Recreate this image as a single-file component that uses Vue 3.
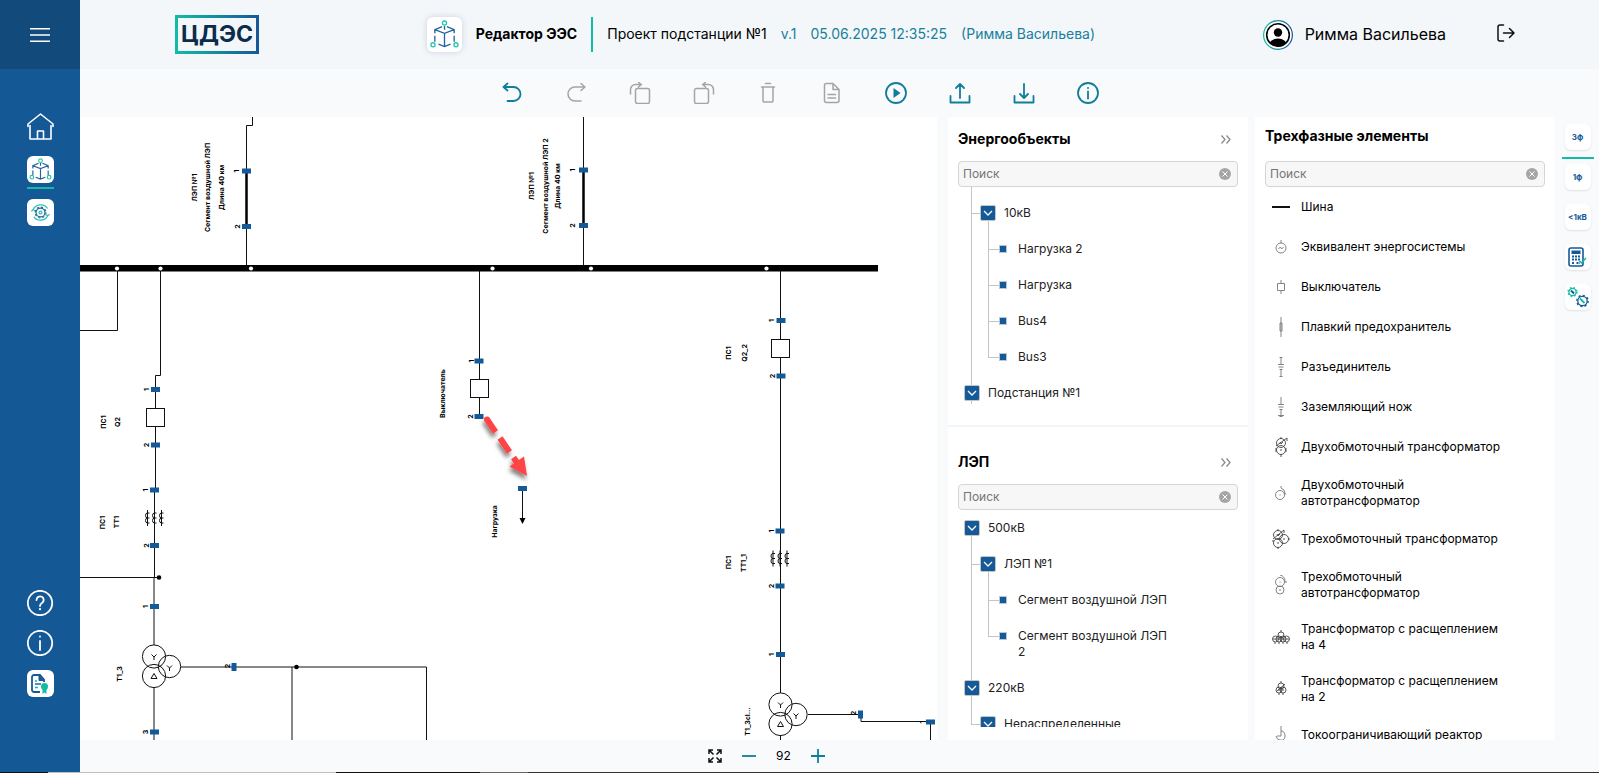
<script setup>
import { ref } from 'vue'

const zoom = ref(92)
const pan = { x: -80, y: -117 }

const circle = (x, y, r) => `M${x - r} ${y}a${r} ${r} 0 1 0 ${2 * r} 0a${r} ${r} 0 1 0 ${-2 * r} 0`

/* Toolbar */
const tools = [
  { name: 'Отменить', on: true, d: 'M7.500 1.500L3.500 5l4 3.500M3.500 5h10a6.500 6.500 0 0 1 0 14H7.500' },
  { name: 'Повторить', on: false, d: 'M17 1.500L21 5l-4 3.500M21 5H11a6.500 6.500 0 0 0 0 14h6' },
  { name: 'Копировать', on: false, d: 'M9.500 6.500h10a2 2 0 0 1 2 2v11a2 2 0 0 1-2 2h-10a2 2 0 0 1-2-2v-11a2 2 0 0 1 2-2zM2.500 12V7.500a5 5 0 0 1 5-5h6M10.500 .5L13.500 2.500l-3 2.500' },
  { name: 'Вставить', on: false, d: 'M4.500 6.500h10a2 2 0 0 1 2 2v11a2 2 0 0 1-2 2h-10a2 2 0 0 1-2-2v-11a2 2 0 0 1 2-2zM21.500 12V7.500a5 5 0 0 0-5-5h-6M13.500 .5L10.500 2.500l3 2.500' },
  { name: 'Удалить', on: false, d: 'M5.500 5h13M9.500 1.500h5M7 5v14a1 1 0 0 0 1 1h8a1 1 0 0 0 1-1V5' },
  { name: 'Отчёт', on: false, d: 'M4.500 3.500a2 2 0 0 1 2-2H13l6 6v11a2 2 0 0 1-2 2H6.500a2 2 0 0 1-2-2zM13 1.500v6h6M8 12.500h7.500M8 16h7.500' },
  { name: 'Запустить расчёт', on: true, d: circle(12, 11, 10), f: 'M9.500 6l7 5-7 5z' },
  { name: 'Выгрузить', on: true, d: 'M2.500 14v6.500h19V14M12 16V2M8 6l4-4 4 4' },
  { name: 'Загрузить', on: true, d: 'M2.500 14v6.500h19V14M12 2v14M8 12l4 4 4-4' },
  { name: 'Информация', on: true, d: circle(12, 11, 10) + 'M12 9.500v7', f: circle(12, 6, 1) },
]

/* Single-line diagram */
const wires = [
  'M252.500 117V125.500H246.500V266',
  'M583.500 117V266',
  'M117.500 271V330.500H80',
  'M160.500 271V375.500H155.500V490',
  'M154.500 490V577',
  'M80 577.500H159',
  'M154 577V645M154 688V740',
  'M181 667H426.500V740M292 667V740',
  'M479.500 271V416',
  'M522.500 489V520',
  'M780.500 271V693M780.500 735V740',
  'M808 714.500H861V721.500H930.500V740',
]
const joints = [117, 160.5, 251, 492.5, 591, 766.5]
const dots = [[159, 577.5], [296.5, 667]]
const ports = [
  [246.5, 171], [246.5, 226.5], [583.5, 170], [583.5, 225.5],
  [155.5, 389.5], [155.5, 445], [154.5, 490], [154.5, 545.5], [154.5, 606.5], [154.5, 732],
  [479, 361], [479, 416.5], [522.5, 488.5],
  [781, 320.5], [781, 376], [780, 531], [780, 586], [780.5, 654.5], [930.5, 722],
]
const sidePorts = [[234, 667], [860.5, 714.5]]
const breakers = [[146.5, 408.5], [470.5, 379.5], [771.5, 339.5]]
const coils = [[147.5, 518], [154.5, 518], [161.5, 518], [773, 558.5], [780, 558.5], [787, 558.5]]
const transformers = [[154, 656.5], [780.5, 704.5]]
const labels = [
  [194, 187.5, 'ЛЭП №1'], [207.5, 187.5, 'Сегмент воздушной ЛЭП'], [221, 187.5, 'Длина 40 км'],
  [531.5, 186, 'ЛЭП №1'], [545, 186, 'Сегмент воздушной ЛЭП 2'], [557.5, 186, 'Длина 40 км'],
  [103.5, 422, 'ПС1'], [117.5, 422, 'Q2'], [102.5, 522.5, 'ПС1'], [116.5, 522, 'ТТ1'],
  [119.5, 674, 'Т1_3'], [442, 393.5, 'Выключатель'], [494.5, 521.5, 'Нагрузка'],
  [728.5, 353, 'ПС1'], [744, 353, 'Q2_2'], [728, 562.5, 'ПС1'], [743, 563, 'ТТ1_1'], [747, 721.5, 'Т1_3cl...'],
  [236, 171, '1'], [237, 226.5, '2'], [572.5, 170, '1'], [572.5, 225.5, '2'],
  [146.5, 389.5, '1'], [146.5, 445, '2'], [145.5, 490, '1'], [146.5, 545.5, '2'], [145.5, 606.5, '1'], [145.5, 732, '3'],
  [471, 361, '1'], [470.5, 416.5, '2'], [771.5, 320.5, '1'], [772.5, 376, '2'],
  [771.5, 531, '1'], [771.5, 586, '2'], [771.5, 654.5, '1'],
  [227.5, 666, '2'], [853.5, 713, '2'], [922, 722, '1'],
]

/* Trees */
const objects = [
  { children: [{ name: '10кВ', children: ['Нагрузка 2', 'Нагрузка', 'Bus4', 'Bus3'] }] },
  { name: 'Подстанция №1', children: [] },
]
const lines = [
  { name: '500кВ', children: [{ name: 'ЛЭП №1', children: ['Сегмент воздушной ЛЭП', 'Сегмент воздушной ЛЭП 2'] }] },
  { name: '220кВ', children: [{ name: 'Нераспределенные', children: [] }] },
]
const trees = [
  { id: 'objects', title: 'Энергообъекты', nodes: objects },
  { id: 'lines', title: 'ЛЭП', nodes: lines },
]

/* Element palette */
const palette = [
  { name: 'Шина', bold: true, d: 'M1 10h18' },
  { name: 'Эквивалент энергосистемы', d: circle(10, 11, 5) + 'M10 3v3M7.500 12q1.500-3 2.500-1t2.500-1' },
  { name: 'Выключатель', d: 'M6.500 6.500h7v7h-7zM10 3v3M10 14v3' },
  { name: 'Плавкий предохранитель', d: 'M10 0v20M9 6h2v8h-2z' },
  { name: 'Разъединитель', d: 'M10 0v7M10 12v8M7 7.500h6M7.500 10h5M8.500 12.500h3M8.500 .5h3M8.500 19.500h3' },
  { name: 'Заземляющий нож', d: 'M10 0v7M10 12v7M7 7.500h6M7.500 10h5M8.500 12.500h3M7 18.500h6M8.500 19.500h3' },
  { name: 'Двухобмоточный трансформатор', dark: true, d: circle(10, 6, 4.5) + circle(10, 13, 4.5) + 'M10 0v2M10 17v3M5 9L16 1M16 1v3M9 5l1 2 2-2M9 13h2M5 11v4M15 11v4' },
  { name: 'Двухобмоточный автотрансформатор', d: circle(9, 12, 4.5) + 'M9 11.500v1M10 3v2q4 1 4 6h1' },
  { name: 'Трехобмоточный трансформатор', dark: true, d: circle(7, 6, 4.5) + circle(7, 14, 4.5) + circle(13, 10, 4.5) + 'M7 0v2M7 18v2M17 10h2M2 10l11-9M13 1v3M6 5l1 2 2-2M6 14h2M12 10h2M1 12h2' },
  { name: 'Трехобмоточный автотрансформатор', d: circle(9, 7, 4.5) + circle(9, 15, 4) + 'M9 6.500v1M8 15h2M9 0q5 1 5 7h2' },
  { name: 'Трансформатор с расщеплением на 4', dark: true, d: circle(10, 8, 3) + circle(4.5, 12, 3) + circle(8, 12, 3) + circle(12, 12, 3) + circle(15.5, 12, 3) + 'M10 3v2M4 15v2M8 15v2M12 15v2M16 15v2M2 12h16' },
  { name: 'Трансформатор с расщеплением на 2', dark: true, d: circle(10, 7, 3) + circle(8, 11, 3) + circle(12, 11, 3) + 'M10 2v2M8 14v2M12 14v2M6 12l8-7M7 11h6' },
  { name: 'Токоограничивающий реактор', d: 'M10 1v10H6M10 6q4 0 4 5t-5 4q-3 0-4-4M10 15v4' },
]
</script>

<template>
  <div class="app">
    <aside class="side">
      <button class="burger" aria-label="Меню">
        <svg width="20" height="14" viewBox="0 0 20 14" stroke="#fff" stroke-width="1.4"><path d="M0 .7h20M0 7h20M0 13.300h20" /></svg>
      </button>
      <nav class="side-nav">
        <a href="#home" class="side-link" aria-label="Главная">
          <svg width="27" height="27" viewBox="0 0 27 27" fill="none" stroke="#fff" stroke-width="1.600" stroke-linejoin="round" stroke-linecap="round">
            <path d="M3 12.500V26h21V12.500M1 13.500v-2.500L13.500 1 26 11v2.500M10.500 26v-8h6v8" />
          </svg>
        </a>
        <a href="#editor" class="side-link tile current" aria-label="Редактор">
          <svg width="23" height="23" viewBox="0 0 24 24" fill="none" stroke="#24629d" stroke-width="1.200">
            <path d="M10 5.500L4 8v3M14 5.500L20 8v3M4 8l8 3 8-3M12 11v11M4 13v5M20 13v5M7 20l5 2 5-2M12 5v3" />
            <g stroke="#25c4ad"><circle cx="12" cy="2.800" r="1.900" /><circle cx="3" cy="20" r="1.900" /><circle cx="21" cy="20" r="1.900" /></g>
          </svg>
        </a>
        <a href="#settings" class="side-link tile" aria-label="Настройки">
          <svg width="19" height="19" viewBox="0 0 24 24" fill="none" stroke-width="1.500">
            <path stroke="#25c4ad" d="M2.500 9A10.500 10.500 0 0 1 21 7M21.500 15.500A10.500 10.500 0 0 1 3.500 17.500M.5 10.500l2-2 3 1M23.500 14l-2 2-3-1" />
            <circle cx="12" cy="12" r="5.600" stroke="#24629d" /><circle cx="12" cy="12" r="6.800" stroke="#24629d" stroke-dasharray="2.600 2.700" />
            <circle cx="12" cy="12" r="1.800" stroke="#25c4ad" />
          </svg>
        </a>
      </nav>
      <nav class="side-foot">
        <a href="#help" class="side-link" aria-label="Справка">
          <svg width="27" height="26" viewBox="0 0 27 26" fill="none" stroke="#fff" stroke-width="1.800" stroke-linecap="round">
            <circle cx="13" cy="13" r="12.200" /><path d="M9.500 10a3.600 3.600 0 1 1 5.500 3q-2 1.200-2 3" /><path d="M13 19v.2" stroke-width="2.200" />
          </svg>
        </a>
        <a href="#about" class="side-link" aria-label="О программе">
          <svg width="27" height="26" viewBox="0 0 27 26" fill="none" stroke="#fff" stroke-width="1.800" stroke-linecap="round">
            <circle cx="13" cy="13" r="12.200" /><path d="M13 11v9M13 6.500v.2" />
          </svg>
        </a>
        <a href="#license" class="side-link tile" aria-label="Лицензия">
          <svg width="18" height="20" viewBox="0 0 18 20" fill="none" stroke="#155a98" stroke-width="1.800">
            <path d="M9 18H3a2 2 0 0 1-2-2V3a2 2 0 0 1 2-2h6l4 4.500v2.500" /><path d="M8 1v5.500h5z" fill="#155a98" stroke-width="1" />
            <path d="M4 7h2M4 13.500h3" stroke="#12bba5" stroke-width="1.400" /><path d="M4 10h6" stroke-width="1.400" />
            <circle cx="13.500" cy="12.500" r="3.500" fill="#12bba5" stroke="none" /><path d="M11.500 14v6l2-1.500 2 1.500v-6z" fill="#12bba5" stroke="none" />
          </svg>
        </a>
      </nav>
    </aside>

    <div class="main">
      <header class="top">
        <a href="#logo" class="logo">ЦДЭС</a>
        <div class="project">
          <span class="project-icon">
            <svg width="29" height="29" viewBox="0 0 24 24" fill="none" stroke="#24629d" stroke-width="1.100">
              <path d="M10 5.500L4 8v3M14 5.500L20 8v3M4 8l8 3 8-3M12 11v11M4 13v5M20 13v5M7 20l5 2 5-2M12 5v3" />
              <g stroke="#25c4ad"><circle cx="12" cy="2.500" r="1.700" /><circle cx="2.500" cy="20.500" r="1.700" /><circle cx="21.500" cy="20.500" r="1.700" /></g>
            </svg>
          </span>
          <h1>Редактор ЭЭС</h1>
          <p class="facts">
            <span class="name">Проект подстанции №1</span>
            <span>v.1</span>
            <span>05.06.2025 12:35:25</span>
            <span>(Римма Васильева)</span>
          </p>
        </div>
        <div class="user">
          <svg width="30" height="30" viewBox="0 0 30 30">
            <defs>
              <linearGradient id="ring"><stop stop-color="#12bba5" /><stop offset="1" stop-color="#155a98" /></linearGradient>
              <clipPath id="face"><circle cx="15" cy="15" r="11.500" /></clipPath>
            </defs>
            <circle cx="15" cy="15" r="14.400" fill="#fff" stroke="url(#ring)" stroke-width="1.200" />
            <circle cx="15" cy="15" r="11.300" fill="none" stroke="#000" stroke-width="1.600" />
            <circle cx="15" cy="12.500" r="4.200" /><ellipse cx="15" cy="25" rx="9" ry="6.500" clip-path="url(#face)" />
          </svg>
          <span>Римма Васильева</span>
          <button class="exit" aria-label="Выйти">
            <svg width="18" height="18" viewBox="0 0 18 18" fill="none" stroke="#111" stroke-width="1.500" stroke-linecap="round" stroke-linejoin="round">
              <path d="M6.500 1H3a2 2 0 0 0-2 2v12a2 2 0 0 0 2 2h3.500M6.500 9H17M12.500 4.500L17 9l-4.500 4.500" />
            </svg>
          </button>
        </div>
      </header>

      <div class="toolbar">
        <button v-for="t in tools" :key="t.name" :aria-label="t.name" :class="{ on: t.on }">
          <svg width="24" height="22" viewBox="0 0 24 22"><path :d="t.d" /><path v-if="t.f" class="solid" :d="t.f" /></svg>
        </button>
      </div>

      <div class="work">
        <svg class="canvas">
          <defs>
            <filter id="shade" x="-30%" y="-30%" width="160%" height="160%"><feDropShadow dx="-1" dy="4" stdDeviation="2" flood-opacity=".5" /></filter>
          </defs>
          <g :transform="`translate(${pan.x} ${pan.y})`">
            <path v-for="w in wires" :key="w" :d="w" class="wire" />
            <path d="M246.500 172V226M583.500 171V225" stroke="#000" stroke-width="2.500" />
            <rect x="70" y="265" width="808" height="6.500" />
            <circle v-for="x in joints" :key="x" :cx="x" cy="268.500" r="2.100" fill="#fff" />
            <circle v-for="d in dots" :key="d[0]" :cx="d[0]" :cy="d[1]" r="2.300" />
            <rect v-for="b in breakers" :key="b[0]" :x="b[0]" :y="b[1]" width="18" height="18" class="shape" />
            <path v-for="c in coils" :key="c" class="wire" :d="`M${c[0]} ${c[1] - 8}v16M${c[0] + 2} ${c[1] - 5}h-2a2 2.500 0 0 0 0 5a2 2.500 0 0 0 0 5h2M${c[0]} ${c[1]}h2`" />
            <g v-for="t in transformers" :key="t[0]" :transform="`translate(${t[0]} ${t[1]})`">
              <circle r="11.600" class="ring" /><circle cy="19.500" r="11.600" class="ring" /><circle cx="15.500" cy="10" r="11.200" class="ring" />
              <path class="wire" d="M-2.500 -2L0 0.500L2.500 -2M0 0.500V3.500M13 9l2.500 2.500L18 9M15.500 11.500v3M-3 22h6l-3-5z" />
            </g>
            <rect v-for="p in ports" :key="p" :x="p[0] - 4.5" :y="p[1] - 2.5" width="9" height="5" class="port" />
            <rect v-for="p in sidePorts" :key="p" :x="p[0] - 2.5" :y="p[1] - 4" width="5" height="8" class="port" />
            <path d="M519.500 518h6l-3 6z" />
            <text v-for="l in labels" :key="l" :transform="`translate(${l[0]} ${l[1]}) rotate(-90)`">{{ l[2] }}</text>
            <g filter="url(#shade)" stroke="#fd4444" stroke-width="6" fill="#fd4444">
              <circle cx="487" cy="419.500" r="3" stroke="none" />
              <path d="M487 419.500L495.500 432M500 438L509.500 452M513.500 457.500L518 464" />
              <path d="M527 476L509.500 466.500L524 456.500Z" stroke="none" />
            </g>
          </g>
        </svg>

        <div class="panel split">
          <section v-for="t in trees" :key="t.id" :class="t.id">
            <div class="head">
              <h2>{{ t.title }}</h2>
              <button aria-label="Свернуть">
                <svg width="10" height="9" viewBox="0 0 10 9" fill="none" stroke="#8b8b8b" stroke-width="1.300"><path d="M.5 .5l3.500 4-3.500 4M5.500 .5l3.500 4-3.500 4" /></svg>
              </button>
            </div>
            <div class="search">
              <input type="text" placeholder="Поиск" :aria-label="'Поиск: ' + t.title" />
              <button aria-label="Очистить">
                <svg width="12" height="12" viewBox="0 0 12 12"><circle cx="6" cy="6" r="6" fill="#a5a5a5" /><path d="M3.500 3.500l5 5M8.500 3.500l-5 5" stroke="#fff" /></svg>
              </button>
            </div>
            <ul class="tree">
              <li v-for="(n, i) in t.nodes" :key="i">
                <div v-if="n.name" class="row">
                  <button class="toggle" :aria-label="'Свернуть ' + n.name"><svg width="10" height="6" viewBox="0 0 10 6"><path d="M1 1l4 4 4-4" /></svg></button>
                  <span>{{ n.name }}</span>
                </div>
                <ul v-if="n.children.length" class="branch">
                  <li v-for="b in n.children" :key="b.name">
                    <div class="row">
                      <button class="toggle" :aria-label="'Свернуть ' + b.name"><svg width="10" height="6" viewBox="0 0 10 6"><path d="M1 1l4 4 4-4" /></svg></button>
                      <span>{{ b.name }}</span>
                    </div>
                    <ul class="leaves">
                      <li v-for="leaf in b.children" :key="leaf" class="row"><i></i><span>{{ leaf }}</span></li>
                    </ul>
                  </li>
                </ul>
              </li>
            </ul>
          </section>
        </div>

        <section class="panel palette">
          <h2>Трехфазные элементы</h2>
          <div class="search">
            <input type="text" placeholder="Поиск" aria-label="Поиск: Трехфазные элементы" />
            <button aria-label="Очистить">
              <svg width="12" height="12" viewBox="0 0 12 12"><circle cx="6" cy="6" r="6" fill="#a5a5a5" /><path d="M3.500 3.500l5 5M8.500 3.500l-5 5" stroke="#fff" /></svg>
            </button>
          </div>
          <ul>
            <li v-for="p in palette" :key="p.name">
              <svg width="20" height="20" viewBox="0 0 20 20" :class="{ bold: p.bold, dark: p.dark }"><path :d="p.d" /></svg>
              <span>{{ p.name }}</span>
            </li>
          </ul>
        </section>

        <nav class="rail">
          <button class="active">3ф</button>
          <button>1ф</button>
          <button>&lt;1кВ</button>
          <button aria-label="Калькулятор">
            <svg width="19" height="20" viewBox="0 0 19 20" fill="none" stroke="#155a98">
              <rect x="1" y="1" width="14" height="18" rx="2" stroke-width="1.600" /><rect x="3.500" y="3.500" width="9" height="3.500" fill="#155a98" stroke="none" />
              <path d="M4 9.500h8M4 12.500h8M4 16h3M8.500 16h3.500" stroke-width="2" stroke-dasharray="2 1" /><path d="M11.500 14l2 2 4.500-5" stroke="#12bba5" stroke-width="1.500" />
            </svg>
          </button>
          <button aria-label="Параметры">
            <svg width="22" height="22" viewBox="0 0 22 22" fill="none" stroke-width="1.300">
              <circle cx="5.500" cy="6" r="3.600" stroke="#12bba5" /><circle cx="5.500" cy="6" r="4.500" stroke="#12bba5" stroke-dasharray="1.600 2" /><path d="M4 4.500l3 3" stroke="#155a98" stroke-width="2" />
              <circle cx="15.500" cy="15" r="4.700" stroke="#155a98" /><circle cx="15.500" cy="15" r="5.700" stroke="#155a98" stroke-dasharray="2.200 2.200" /><path d="M13 12.500l4.500 4.500" stroke="#12bba5" stroke-width="1.800" />
            </svg>
          </button>
        </nav>
      </div>

      <footer class="zoom">
        <button aria-label="По размеру экрана">
          <svg width="14" height="14" viewBox="0 0 14 14" fill="none" stroke="#111" stroke-width="1.500"><path d="M1 5V1h4M1 1l4.500 4.500M9 1h4v4M13 1L8.500 5.500M1 9v4h4M1 13l4.500-4.500M13 9v4H9M13 13L8.500 8.500" /></svg>
        </button>
        <button aria-label="Уменьшить" @click="zoom--"><svg width="14" height="14" viewBox="0 0 14 14" stroke="#0f7e9b" stroke-width="1.800"><path d="M0 7h14" /></svg></button>
        <output>{{ zoom }}</output>
        <button aria-label="Увеличить" @click="zoom++"><svg width="14" height="14" viewBox="0 0 14 14" stroke="#0f7e9b" stroke-width="1.800"><path d="M0 7h14M7 0v14" /></svg></button>
      </footer>
    </div>
    <div class="edge"></div>
  </div>
</template>

<style>
body { margin: 0; }
</style>

<style scoped>
.app {
  display: grid;
  grid-template: minmax(0, 1fr) 1px / 80px minmax(0, 1fr);
  height: 100vh;
  overflow: hidden;
  background: #f9fafc;
  color: #000;
  font: 12px/16px Inter, "Noto Sans", sans-serif;
}
button { padding: 0; border: 0; background: none; font: inherit; color: inherit; display: grid; place-items: center; cursor: pointer; }
svg { display: block; flex: none; }
ul { list-style: none; margin: 0; padding: 0; }
h1, h2, p { margin: 0; }
h2 { font-size: 14px; line-height: 20px; font-weight: 700; }

.side { display: flex; flex-direction: column; background: #145896; }
.burger { height: 69px; background: #124a7b; }
.side-nav { display: flex; flex-direction: column; align-items: center; gap: 16px; padding-top: 44px; }
.side-foot { display: flex; flex-direction: column; align-items: center; gap: 14px; margin-top: auto; padding-bottom: 75px; }
.side-link { position: relative; display: grid; place-items: center; width: 27px; }
.tile { height: 27px; border-radius: 6px; background: #fff; }
.current::after { content: ""; position: absolute; left: 0; right: 0; top: 31px; height: 2px; background: #12bba5; }

.main { display: grid; grid-template-rows: 69px 48px minmax(0, 1fr) 32px; min-width: 0; }
.top { display: flex; align-items: center; justify-content: space-between; padding: 0 84px 0 95px; background: #f3f7fa; }
.logo {
  box-sizing: border-box;
  height: 39px;
  padding: 0 3px;
  border: 3px solid;
  border-image: linear-gradient(90deg, #12bba5, #155a98) 1;
  color: #0b2c4b;
  font-weight: 700;
  font-size: 23px;
  line-height: 33px;
  text-decoration: none;
}
.project { display: flex; align-items: center; }
.project-icon { display: grid; place-items: center; width: 35px; height: 35px; border-radius: 6px; background: #fff; box-shadow: 0 0 6px rgba(40, 70, 100, .2); }
h1 { margin: 0 14px; padding-bottom: 1px; font-size: 14px; font-weight: 700; }
.facts { display: flex; align-items: center; gap: 14px; height: 35px; padding-left: 14px; border-left: 2px solid #12bba5; font-size: 14px; color: #1a809c; }
.facts span { padding-bottom: 1px; }
.facts .name { color: #000; }
.user { display: flex; align-items: center; gap: 12px; font-size: 16px; line-height: 20px; }
.user span { padding-bottom: 2px; }
.exit { margin-left: 39px; padding-bottom: 4px; }

.toolbar { display: flex; align-items: center; justify-content: center; gap: 40px; padding-right: 79px; }
.toolbar svg { fill: none; stroke: #a3a5a8; stroke-width: 1.5; stroke-linecap: round; stroke-linejoin: round; }
.toolbar .on svg { stroke: #0f7e9b; stroke-width: 1.8; }
.toolbar .solid { fill: #0f7e9b; stroke: none; }

.work { display: grid; grid-template-columns: minmax(0, 1fr) 300px 307px 44px; min-height: 0; }
.canvas { width: calc(100% - 11px); height: 100%; background: #fff; }
.wire { fill: none; stroke: #111; stroke-width: 1; }
.ring { fill: none; stroke: #111; }
.shape { fill: #fff; stroke: #111; }
.port { fill: #155a98; }
.canvas text { font-size: 7px; font-weight: 700; text-anchor: middle; dominant-baseline: central; text-rendering: geometricPrecision; }

.panel { min-height: 0; background: #fff; }
.split { display: flex; flex-direction: column; }
.split section { flex: 1 1 0; min-height: 0; display: flex; flex-direction: column; padding: 0 10px 13px; }
.split .objects { padding-bottom: 21px; border-bottom: 2px solid #f1f5f9; }
.split .lines { padding-top: 13px; }
.head { display: flex; align-items: center; justify-content: space-between; height: 44px; padding-right: 7px; flex: none; }
.search { display: flex; align-items: center; box-sizing: border-box; flex: none; height: 26px; padding-right: 6px; border: 1px solid #d5d5d5; border-radius: 4px; background: #f7f7f7; }
.search input { flex: 1; min-width: 0; padding: 0 4px; border: 0; outline: 0; background: none; font: inherit; }
.search input::placeholder { color: #757575; opacity: 1; }

.tree { position: relative; flex: 1; min-height: 0; overflow: hidden; padding-left: 6px; color: #222; }
.tree::before { content: ""; position: absolute; left: 13px; top: 0; bottom: 0; width: 1px; background: #c4c4c4; }
.lines .tree::before { top: 18px; bottom: 3px; }
.objects .tree > li:first-child { padding-top: 8px; }
.row { position: relative; display: flex; padding: 10px 0; }
.row span { max-width: 152px; }
.toggle { box-sizing: border-box; width: 16px; height: 16px; margin-right: 8px; border: 1px solid #c4c4c4; border-radius: 2px; background: #155a98; flex: none; }
.toggle path { fill: none; stroke: #fff; stroke-width: 1.3; }
.branch { padding-left: 16px; }
.branch > li > .row::before { content: ""; position: absolute; left: -9px; top: 18px; width: 9px; height: 1px; background: #c4c4c4; }
.leaves { padding-left: 8px; }
.leaves .row { padding-left: 11px; }
.leaves .row::before { content: ""; position: absolute; left: 0; top: 0; bottom: 0; width: 1px; background: #c4c4c4; }
.leaves .row:first-child::before { top: -10px; }
.leaves .row:last-child::before { bottom: auto; height: 18px; }
.leaves .row::after { content: ""; position: absolute; left: 0; top: 18px; width: 11px; height: 1px; background: #c4c4c4; }
.leaves i { box-sizing: border-box; width: 8px; height: 8px; margin: 4px 11px 0 0; border: 1px solid #b9c6d3; background: #155a98; flex: none; }

.palette { display: flex; flex-direction: column; margin-left: 7px; padding: 0 10px; overflow: hidden; }
.palette h2 { padding: 9px 0 15px; }
.palette li { display: flex; align-items: center; gap: 10px; padding: 10px 0 10px 6px; }
.palette li span { max-width: 204px; }
.palette li svg { fill: none; stroke: #777; stroke-width: .9; }
.palette li .dark { stroke: #444; }
.palette li .bold { stroke: #111; stroke-width: 2; }

.rail { display: flex; flex-direction: column; align-items: center; gap: 14px; padding: 7px 0 0 1px; }
.rail button { position: relative; width: 26px; height: 26px; border-radius: 6px; background: #fff; box-shadow: 0 1px 2px rgba(0, 0, 0, .1); color: #155a98; font-size: 8px; font-weight: 700; }
.rail .active::after { content: ""; position: absolute; left: -3px; right: -3px; top: 33px; height: 2px; background: #12bba5; }

.zoom { display: flex; align-items: center; justify-content: center; gap: 20px; padding-right: 146px; }
.edge { grid-column: 1 / -1; background: linear-gradient(90deg, #111 3%, #c0c0c0 3%, #c0c0c0 21%, #111 21%, #111 30%, #666 30%, #666 33%, #333 33%); }
</style>
